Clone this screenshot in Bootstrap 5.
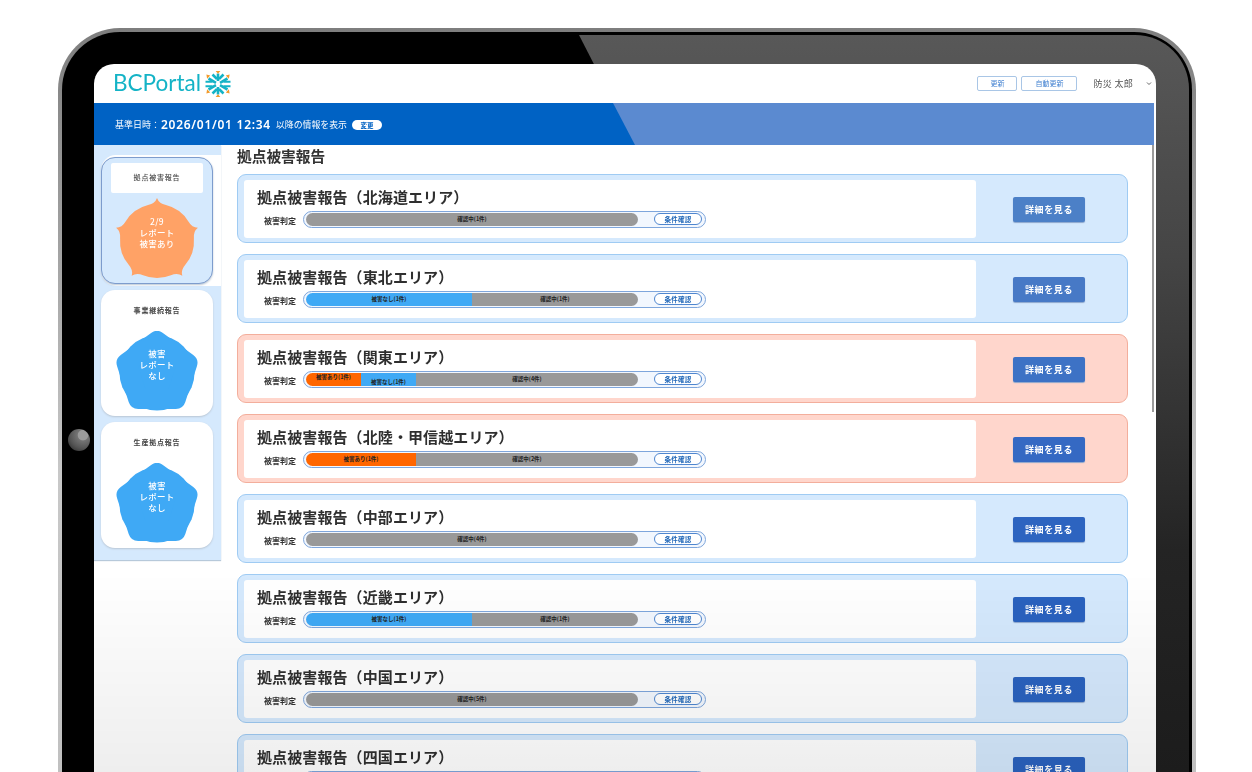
<!DOCTYPE html>
<html lang="ja">
<head>
<meta charset="utf-8">
<title>BCPortal</title>
<link href="https://cdn.jsdelivr.net/npm/bootstrap@5.3.0/dist/css/bootstrap.min.css" rel="stylesheet">
<style>
html,body{height:772px;overflow:hidden;background:#fff;}
body{font-family:"Noto Sans CJK JP","Noto Sans",sans-serif;color:#333;}
.tab-outer{margin:28px 0 0 58px;width:1138px;height:744px;padding:4px 4px 0;border-radius:62px 62px 0 0;background:linear-gradient(#7e7e7e,#c8c8c8 60%,#c0c0c0);}
.tab-inner{position:relative;height:100%;padding:32px 36px 0 32px;background:#000;border-radius:58px 58px 0 0;}
.glare-bezel{position:absolute;left:0;right:3px;top:3px;bottom:0;border-top-right-radius:54px;clip-path:polygon(517px 0,100% 0,100% 100%,895px 100%);background:linear-gradient(#585858,#454545 30%,#242424 70%,#1c1c1c);}
.cam{position:absolute;left:6px;top:397px;width:22px;height:22px;border-radius:50%;background:radial-gradient(circle at 68% 28%,#9a9a9a 0 22%,#747474 26%,#555 60%,#222 100%);}
.screen{position:relative;height:708px;overflow:hidden;background:#fff;border-radius:20px 20px 0 0;filter:blur(.4px);}
.top-head{height:39px;padding:0 4px 0 19px;}
.logo-text{font-family:"Lato",sans-serif;font-weight:400;font-size:22.5px;color:#14b3c6;line-height:1;}
.logo-mark{margin-left:4px;}
.head-btn{font-size:7px;line-height:13px;padding:0;height:15px;color:#3f7fd0;background:#fff;border:1px solid #a9c6e6;border-radius:2px;}
.w-a{width:40px}.w-b{width:56px}
.user-name{font-size:9px;color:#555;margin-left:12px;letter-spacing:.3px;}
.chev{margin-left:9px;}
.band{height:42px;width:1060px;background:#0062c4;color:#fff;padding:1px 0 0 21px;}
.band-a{font-size:9px;}
.band-d{font-family:"Noto Sans",sans-serif;font-weight:600;font-size:12px;letter-spacing:.72px;margin:0 5px 0 1px;}
.band-b{font-size:8.9px;}
.band-pill{font-size:6.5px;font-weight:700;line-height:10px;height:10px;width:30px;padding:0;margin-left:5px;border:0;border-radius:5px;background:#fff;color:#0062c4;}
.side-col{width:127px;height:415px;padding:10px 8px 0 7px;background:#d5e9fd;box-shadow:0 1px 1px #b7c9da;flex:none;}
.side-act{margin-right:-8px;padding:2px 8px 2px 0;background:#fff;border-radius:15px 0 0 15px;margin-bottom:4px;}
.side-card{height:126px;border-radius:14px;background:#fff;box-shadow:0 1px 2px #b9c6d4;margin-bottom:6px;}
.side-act .side-card{height:127px;background:#d5e9fd;border:1px solid #7d9ccd;margin-bottom:0;padding:5px 9px 0;}
.side-ttl{font-size:7px;letter-spacing:.8px;text-align:center;font-weight:700;color:#444;line-height:10px;}
.side-act .side-ttl{height:30px;line-height:28px;background:#fff;border-radius:2px;font-weight:500;}
.plain-ttl{padding-top:15px;}
.star-wrap{display:grid;justify-items:center;align-items:center;}
.star-wrap>*{grid-area:1/1;}
.star-gap{margin-top:16px;}
.star-txt{color:#fff;font-size:8.5px;line-height:11px;text-align:center;letter-spacing:.3px;font-weight:500;padding-bottom:14px;}
.star-txt-o{padding-bottom:18px;}
.main-col{padding:0 28px 0 16px;flex:1;}
.main-ttl{font-size:14.7px;font-weight:700;line-height:20px;margin:1px 0 8px;color:#333;}
.rep{height:69px;margin-bottom:11px;padding:4px 0 4px 6px;border:1px solid #9fcbf3;border-radius:9px;background:#d5e9fd;}
.rep-red{border-color:#f3ae9c;background:#ffd6cc;}
.rep-in{width:732px;height:58px;background:#fff;border-radius:3px;padding:6px 0 0 13px;}
.rep-ttl{font-size:15px;font-weight:700;line-height:21px;color:#2f2f2f;letter-spacing:.1px;margin-bottom:4px;}
.lbl{font-size:8px;font-weight:700;margin:0 4px 0 7px;width:35px;line-height:17px;white-space:nowrap;color:#333;padding-top:1px;}
.pill{width:403px;height:17px;border:1px solid #7ea6dc;border-radius:9px;background:#f2f7fe;padding:1px 3px 1px 2px;}
.bar{width:332px;height:13px;border-radius:7px;overflow:hidden;flex:none;}
.seg{font-size:5.5px;font-weight:700;color:#222;line-height:13px;text-align:center;white-space:nowrap;}
.s-o{background:#ff6600;}.s-b{background:#3fa9f5;}.s-g{background:#999;flex:1;}
.s-up{line-height:8px;}.s-dn{line-height:19px;}
.cond{width:48px;height:12px;margin-left:16px;padding:0;border:1px solid #4f86cf;border-radius:6px;background:#fff;color:#1f66b8;font-size:6.5px;font-weight:700;line-height:10px;letter-spacing:.3px;}
.go-btn{width:72px;height:25px;padding:0;margin:2px 0 0 37px;border:0;border-radius:2px;background:#2a62bf;color:#fff;font-size:9px;font-weight:700;letter-spacing:.6px;box-shadow:0 1px 1px #8ba6cc;}
.go-1{background:#4c80c7;}.go-2{background:#4779c6;}.go-3{background:#3d72c5;}.go-4{background:#3569c3;}.go-5{background:#2d64c0;}
.sb{position:absolute;right:2px;top:81px;width:2px;height:267px;background:#9b9b9b;}
.glare-band{position:absolute;left:0;width:1060px;top:39px;height:42px;pointer-events:none;clip-path:polygon(519px 0,100% 0,100% 100%,541px 100%);background:rgba(239,206,228,.38);}
.fade-low{position:absolute;left:0;right:0;bottom:0;height:200px;pointer-events:none;background:linear-gradient(rgba(0,0,0,0),rgba(0,0,0,.065));}
</style>
</head>
<body>
<div class="tab-outer">
<div class="tab-inner">
<div class="glare-bezel"></div>
<div class="cam"></div>
<div class="screen">
  <header class="top-head d-flex align-items-center">
    <span class="logo-text">BCPortal</span>
    <svg class="logo-mark" width="26" height="26" viewBox="-13 -13 26 26" aria-hidden="true">
      <g stroke="#14b3c6" fill="none">
        <path d="M-9.5-5.5-2-1.2M9.5-5.5 2-1.2M-9.5 5.5-2 1.2M9.5 5.5 2 1.2" stroke-width="2.6"/>
        <path d="M0-3 0-10.5M0 3 0 10.5" stroke-width="2.6"/>
        <path d="M-5.5-9.5-1-5M5.5-9.5 1-5M-5.5 9.5-1 5M5.5 9.5 1 5" stroke-width="2.6"/>
        <path d="M-12.5-2.3H-5.5M-12.5 2.3H-5.5M12.5-2.3H5.5M12.5 2.3H5.5" stroke-width="2"/>
      </g>
      <g fill="#f39a2b">
        <path d="M-2.4-13H2.4L0-10.2ZM-2.4 13H2.4L0 10.2Z"/>
        <path d="M-11.6-9.6-7.8-8.4-10.9-5.2ZM11.6-9.6 7.8-8.4 10.9-5.2ZM-11.6 9.6-7.8 8.4-10.9 5.2ZM11.6 9.6 7.8 8.4 10.9 5.2Z"/>
      </g>
    </svg>
    <div class="ms-auto d-flex align-items-center gap-1">
      <button class="btn head-btn w-a" type="button">更新</button>
      <button class="btn head-btn w-b" type="button">自動更新</button>
      <span class="user-name">防災 太郎</span>
      <svg class="chev" width="6" height="5" viewBox="0 0 6 5" aria-hidden="true"><path d="M1 1.5 3 3.5 5 1.5" fill="none" stroke="#666"/></svg>
    </div>
  </header>
  <div class="band d-flex align-items-center">
    <span class="band-a">基準日時：</span><span class="band-d">2026/01/01 12:34</span><span class="band-b">以降の情報を表示</span>
    <button class="btn band-pill" type="button">変更</button>
  </div>
  <div class="d-flex">
    <aside class="side-col">
      <div class="side-act">
        <div class="side-card">
          <div class="side-ttl">拠点被害報告</div>
          <div class="star-wrap pt-1">
            <svg width="88" height="88" viewBox="-44 -44 88 88" aria-hidden="true"><path fill="#ffa266" d="M-8.95-35.9Q-1.96-37.45 0-43 1.96-37.45 8.95-35.9A37 37 0 0 1 31.4-19.6Q35-13.4 40.9-13.3 36.2-9.7 36.9-2.6A37 37 0 0 1 28.3 23.8Q23.6 29.1 25.3 34.8 20.4 31.5 13.9 34.3A37 37 0 0 1-13.9 34.3Q-20.4 31.5-25.3 34.8-23.6 29.1-28.3 23.8A37 37 0 0 1-36.9-2.6Q-36.2-9.7-40.9-13.3-35-13.4-31.4-19.6A37 37 0 0 1-8.95-35.9Z"/></svg>
            <div class="star-txt star-txt-o">2/9<br>レポート<br>被害あり</div>
          </div>
        </div>
      </div>
      <div class="side-card">
        <div class="side-ttl plain-ttl">事業継続報告</div>
        <div class="star-wrap star-gap">
          <svg width="82" height="80" viewBox="-41 -42 82 80" fill="#3fa9f5" aria-hidden="true"><circle r="37.5"/><path stroke="#3fa9f5" stroke-width="20" stroke-linejoin="round" d="M0-32 30.4-9.9 18.8 25.9H-18.8L-30.4-9.9Z"/></svg>
          <div class="star-txt">被害<br>レポート<br>なし</div>
        </div>
      </div>
      <div class="side-card">
        <div class="side-ttl plain-ttl">生産拠点報告</div>
        <div class="star-wrap star-gap">
          <svg width="82" height="80" viewBox="-41 -42 82 80" fill="#3fa9f5" aria-hidden="true"><circle r="37.5"/><path stroke="#3fa9f5" stroke-width="20" stroke-linejoin="round" d="M0-32 30.4-9.9 18.8 25.9H-18.8L-30.4-9.9Z"/></svg>
          <div class="star-txt">被害<br>レポート<br>なし</div>
        </div>
      </div>
    </aside>
    <main class="main-col">
      <h1 class="main-ttl">拠点被害報告</h1>

      <section class="rep d-flex align-items-center">
        <div class="rep-in">
          <div class="rep-ttl">拠点被害報告（北海道エリア）</div>
          <div class="d-flex"><span class="lbl">被害判定</span><div class="pill d-flex align-items-center"><div class="bar d-flex"><div class="seg s-g">確認中(1件)</div></div><button class="btn cond" type="button">条件確認</button></div></div>
        </div>
        <button class="btn go-btn go-1" type="button">詳細を見る</button>
      </section>

      <section class="rep d-flex align-items-center">
        <div class="rep-in">
          <div class="rep-ttl">拠点被害報告（東北エリア）</div>
          <div class="d-flex"><span class="lbl">被害判定</span><div class="pill d-flex align-items-center"><div class="bar d-flex"><div class="seg s-b w-50">被害なし(1件)</div><div class="seg s-g">確認中(1件)</div></div><button class="btn cond" type="button">条件確認</button></div></div>
        </div>
        <button class="btn go-btn go-2" type="button">詳細を見る</button>
      </section>

      <section class="rep rep-red d-flex align-items-center">
        <div class="rep-in">
          <div class="rep-ttl">拠点被害報告（関東エリア）</div>
          <div class="d-flex"><span class="lbl">被害判定</span><div class="pill d-flex align-items-center"><div class="bar d-flex"><div class="seg s-o s-up" style="width:55px">被害あり(1件)</div><div class="seg s-b s-dn" style="width:55px">被害なし(1件)</div><div class="seg s-g">確認中(4件)</div></div><button class="btn cond" type="button">条件確認</button></div></div>
        </div>
        <button class="btn go-btn go-3" type="button">詳細を見る</button>
      </section>

      <section class="rep rep-red d-flex align-items-center">
        <div class="rep-in">
          <div class="rep-ttl">拠点被害報告（北陸・甲信越エリア）</div>
          <div class="d-flex"><span class="lbl">被害判定</span><div class="pill d-flex align-items-center"><div class="bar d-flex"><div class="seg s-o" style="width:110px">被害あり(1件)</div><div class="seg s-g">確認中(2件)</div></div><button class="btn cond" type="button">条件確認</button></div></div>
        </div>
        <button class="btn go-btn go-4" type="button">詳細を見る</button>
      </section>

      <section class="rep d-flex align-items-center">
        <div class="rep-in">
          <div class="rep-ttl">拠点被害報告（中部エリア）</div>
          <div class="d-flex"><span class="lbl">被害判定</span><div class="pill d-flex align-items-center"><div class="bar d-flex"><div class="seg s-g">確認中(4件)</div></div><button class="btn cond" type="button">条件確認</button></div></div>
        </div>
        <button class="btn go-btn go-5" type="button">詳細を見る</button>
      </section>

      <section class="rep d-flex align-items-center">
        <div class="rep-in">
          <div class="rep-ttl">拠点被害報告（近畿エリア）</div>
          <div class="d-flex"><span class="lbl">被害判定</span><div class="pill d-flex align-items-center"><div class="bar d-flex"><div class="seg s-b w-50">被害なし(1件)</div><div class="seg s-g">確認中(1件)</div></div><button class="btn cond" type="button">条件確認</button></div></div>
        </div>
        <button class="btn go-btn" type="button">詳細を見る</button>
      </section>

      <section class="rep d-flex align-items-center">
        <div class="rep-in">
          <div class="rep-ttl">拠点被害報告（中国エリア）</div>
          <div class="d-flex"><span class="lbl">被害判定</span><div class="pill d-flex align-items-center"><div class="bar d-flex"><div class="seg s-g">確認中(5件)</div></div><button class="btn cond" type="button">条件確認</button></div></div>
        </div>
        <button class="btn go-btn" type="button">詳細を見る</button>
      </section>

      <section class="rep d-flex align-items-center">
        <div class="rep-in">
          <div class="rep-ttl">拠点被害報告（四国エリア）</div>
          <div class="d-flex"><span class="lbl">被害判定</span><div class="pill d-flex align-items-center"><div class="bar d-flex"><div class="seg s-g">確認中(2件)</div></div><button class="btn cond" type="button">条件確認</button></div></div>
        </div>
        <button class="btn go-btn" type="button">詳細を見る</button>
      </section>
    </main>
  </div>
  <div class="sb"></div>
  <div class="glare-band"></div>
  <div class="fade-low"></div>
</div>
</div>
</div>
<script src="https://cdn.jsdelivr.net/npm/bootstrap@5.3.0/dist/js/bootstrap.bundle.min.js"></script>
</body>
</html>
